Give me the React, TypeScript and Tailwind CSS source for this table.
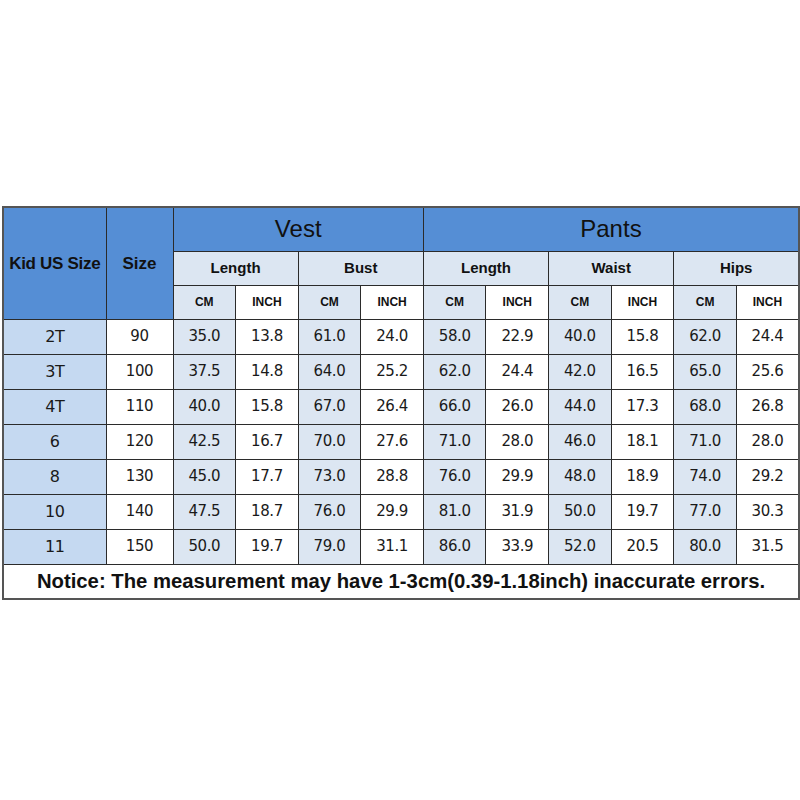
import React from "react";

const rows = [
  ["2T", "90", "35.0", "13.8", "61.0", "24.0", "58.0", "22.9", "40.0", "15.8", "62.0", "24.4"],
  ["3T", "100", "37.5", "14.8", "64.0", "25.2", "62.0", "24.4", "42.0", "16.5", "65.0", "25.6"],
  ["4T", "110", "40.0", "15.8", "67.0", "26.4", "66.0", "26.0", "44.0", "17.3", "68.0", "26.8"],
  ["6", "120", "42.5", "16.7", "70.0", "27.6", "71.0", "28.0", "46.0", "18.1", "71.0", "28.0"],
  ["8", "130", "45.0", "17.7", "73.0", "28.8", "76.0", "29.9", "48.0", "18.9", "74.0", "29.2"],
  ["10", "140", "47.5", "18.7", "76.0", "29.9", "81.0", "31.9", "50.0", "19.7", "77.0", "30.3"],
  ["11", "150", "50.0", "19.7", "79.0", "31.1", "86.0", "33.9", "52.0", "20.5", "80.0", "31.5"],
];

const b = "border border-[#2b2b2b]";
const arial = "font-['Liberation_Sans',Arial,sans-serif]";
const num = "font-['DejaVu_Sans',Verdana,sans-serif] tracking-[-0.4px] text-[#1a1a1a]";

export default function App() {
  const subs = ["Length", "Bust", "Length", "Waist", "Hips"];
  return (
    <div className="w-[800px] h-[800px] bg-white pt-[206px] pl-[2px]">
      <table className={`table-fixed border-collapse w-[796px] border-2 border-[#555] ${arial}`}>
        <colgroup>
          <col className="w-[103px]" />
          <col className="w-[67px]" />
          {Array.from({ length: 10 }).map((_, i) => (
            <col key={i} className="w-[62.6px]" />
          ))}
        </colgroup>
        <tbody>
          <tr className="h-[44px]">
            <td rowSpan={3} className={`${b} bg-[#558ed5] text-center font-bold text-[17px] text-[#111] whitespace-nowrap tracking-[-0.3px]`}>
              Kid US Size
            </td>
            <td rowSpan={3} className={`${b} bg-[#558ed5] text-center font-bold text-[17px] text-[#111]`}>
              Size
            </td>
            <td colSpan={4} className={`${b} bg-[#558ed5] text-center text-[24px] text-[#111]`}>
              Vest
            </td>
            <td colSpan={6} className={`${b} bg-[#558ed5] text-center text-[24px] text-[#111]`}>
              Pants
            </td>
          </tr>
          <tr className="h-[34px]">
            {subs.map((s, i) => (
              <td key={i} colSpan={2} className={`${b} bg-[#dce6f2] text-center font-bold text-[15px] text-[#111]`}>
                {s}
              </td>
            ))}
          </tr>
          <tr className="h-[34px]">
            {Array.from({ length: 10 }).map((_, i) => (
              <td
                key={i}
                className={`${b} ${i % 2 === 0 ? "bg-[#dce6f2]" : "bg-white"} text-center font-bold text-[12px] text-[#111]`}
              >
                {i % 2 === 0 ? "CM" : "INCH"}
              </td>
            ))}
          </tr>
          {rows.map((r, ri) => (
            <tr key={ri} className="h-[35px]">
              {r.map((c, ci) => (
                <td
                  key={ci}
                  className={`${b} text-center ${
                    ci === 0
                      ? `bg-[#c5d9f1] ${num} text-[16px]`
                      : ci === 1
                      ? `bg-white ${num} text-[15px]`
                      : ci % 2 === 0
                      ? `bg-[#dce6f2] ${num} text-[15px]`
                      : `bg-white ${num} text-[15px]`
                  }`}
                >
                  {c}
                </td>
              ))}
            </tr>
          ))}
          <tr className="h-[35px]">
            <td colSpan={12} className={`${b} bg-white text-center font-bold text-[20.3px] text-[#111] whitespace-nowrap`}>
              Notice: The measurement may have 1-3cm(0.39-1.18inch) inaccurate errors.
            </td>
          </tr>
        </tbody>
      </table>
    </div>
  );
}
